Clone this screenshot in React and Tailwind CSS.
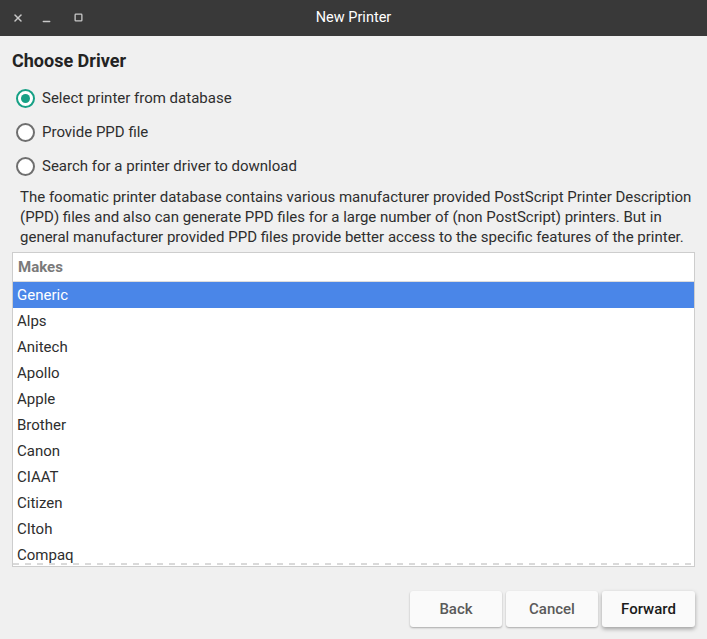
import { X, Minus, Square } from "lucide-react";

const makes = ["Generic", "Alps", "Anitech", "Apollo", "Apple", "Brother", "Canon", "CIAAT", "Citizen", "CItoh", "Compaq"];

function Radio({ checked, label }) {
  return (
    <label className="flex items-center h-[34px] pl-[16px] gap-[7px]">
      <span
        className={`w-[19px] h-[19px] rounded-full border-2 flex items-center justify-center bg-white ${
          checked ? "border-[#16a085]" : "border-[#6f6f6f]"
        }`}
      >
        {checked && <span className="w-[9px] h-[9px] rounded-full bg-[#16a085]" />}
      </span>
      <span className="text-[15px] text-[#2e2e2e]">{label}</span>
    </label>
  );
}

export default function App() {
  return (
    <div className="w-[707px] h-[639px] bg-[#f0f0f0] flex flex-col font-['Roboto',sans-serif] overflow-hidden">
      {/* title bar */}
      <div className="h-[36px] bg-[#393939] flex items-center relative shrink-0">
        <div className="flex items-center pl-[12px] text-[#c8c8c8]">
          <X size={12} strokeWidth={3} />
          <Minus size={11} strokeWidth={3} className="ml-[17px] mt-[6px]" />
          <Square size={9} strokeWidth={3.5} className="ml-[22px] -mt-[2px]" />
        </div>
        <div className="absolute inset-0 flex items-center justify-center text-white text-[14.5px] pointer-events-none">
          New Printer
        </div>
      </div>

      <div className="flex flex-col px-[12px] pt-[13px]">
        <h1 className="text-[18px] font-bold text-[#232323] leading-[24px]">Choose Driver</h1>
        <div className="flex flex-col -ml-[12px] mt-[8px]">
          <Radio checked label="Select printer from database" />
          <Radio label="Provide PPD file" />
          <Radio label="Search for a printer driver to download" />
        </div>
        <p className="pl-[8px] mt-[4px] text-[15px] leading-[20px] text-[#2e2e2e]">
          The foomatic printer database contains various manufacturer provided PostScript Printer Description (PPD) files and also can generate PPD files for a large number of (non PostScript) printers. But in general manufacturer provided PPD files provide better access to the specific features of the printer.
        </p>

        <div className="mt-[5px] h-[315px] border border-[#cdcdcd] bg-white relative overflow-hidden">
          <div className="h-[29px] flex items-center px-[5px] border-b border-[#dcdcdc] text-[15px] font-bold text-[#7a7a7a]">
            Makes
          </div>
          {makes.map((m, i) => (
            <div
              key={m}
              className={`h-[26px] flex items-center px-[4px] text-[15px] ${
                i === 0 ? "bg-[#4a86e8] text-white" : "text-[#2e2e2e]"
              }`}
            >
              {m}
            </div>
          ))}
          <svg className="absolute left-0 bottom-[1px] w-full h-[2px]" preserveAspectRatio="none">
            <line x1="0" y1="1" x2="100%" y2="1" stroke="#b4b4b4" strokeWidth="1" strokeDasharray="6 6" />
          </svg>
        </div>
      </div>

      <div className="flex justify-end gap-[4px] pr-[12px] mt-[24px]">
        <button className="w-[92px] h-[36px] rounded-[3px] bg-[#fafafa] shadow-[0_1px_2px_rgba(0,0,0,0.3)] text-[15px] font-medium text-[#5a5a5a]">
          Back
        </button>
        <button className="w-[92px] h-[36px] rounded-[3px] bg-[#fafafa] shadow-[0_1px_2px_rgba(0,0,0,0.3)] text-[15px] font-medium text-[#5a5a5a]">
          Cancel
        </button>
        <button className="w-[93px] h-[36px] rounded-[3px] bg-[#fafafa] shadow-[0_2px_4px_rgba(0,0,0,0.35)] text-[15px] font-medium text-[#1a1a1a]">
          Forward
        </button>
      </div>
    </div>
  );
}
